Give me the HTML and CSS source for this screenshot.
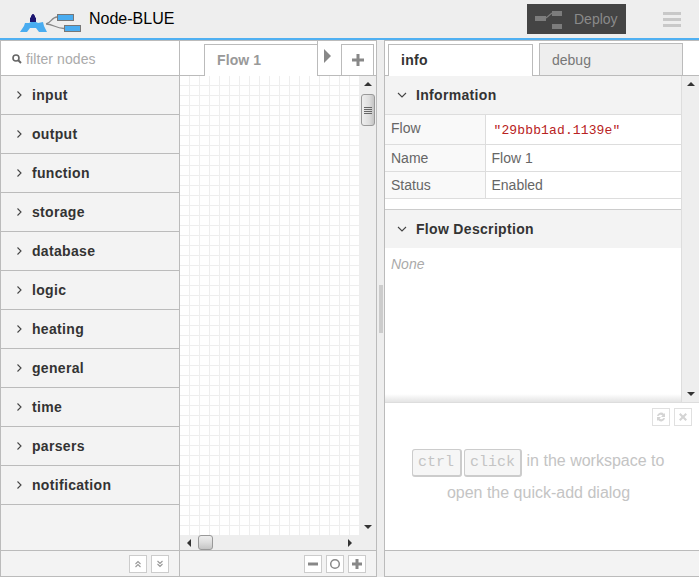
FILE: index.html
```html
<!DOCTYPE html>
<html lang="en">
<head>
    <meta charset="UTF-8">
    <meta name="viewport" content="width=device-width, initial-scale=1.0">
    <title>Node-BLUE</title>
    <link rel="stylesheet" href="styles.css">
</head>
<body>
    <header class="topbar">
        <svg class="logo" width="70" height="24" viewBox="0 0 70 24">
            <path d="M27 12C32 11 33 5 38 5M27 12C34 12 36 16 45 16.500" fill="none" stroke="#888" stroke-width="1.300"/>
            <path d="M1 20L5 14L6 11H10L12 10H17L19 11L24 10L25 14L28 20H20L17 16H11L8 20Z" fill="#49acf0"/>
            <path d="M11 10V6L12 5V4L13.500 2H14.500L16 4V5L17 6V10Z" fill="#1c1570"/>
            <rect x="38.500" y="2.500" width="16" height="6" fill="#49acf0" stroke="#777"/>
            <rect x="45.500" y="13.500" width="16" height="6" fill="#49acf0" stroke="#777"/>
        </svg>
        <span class="brand">Node-BLUE</span>
        <div class="deploy">
            <svg width="28" height="26" viewBox="0 0 28 26">
                <rect x="0" y="10" width="11" height="5" fill="#7c7c7c"/>
                <rect x="17" y="5" width="10" height="5" fill="#7c7c7c"/>
                <rect x="17" y="18" width="10" height="5" fill="#7c7c7c"/>
                <path d="M11 12l6-5" stroke="#7c7c7c" stroke-width="1.200"/>
            </svg>
            <span>Deploy</span>
        </div>
        <div class="menu"><i></i><i></i><i></i></div>
    </header>

    <main class="editor">
        <section class="palette">
            <div class="filter">
                <svg width="10" height="10" viewBox="0 0 10 10">
                    <circle cx="4" cy="4" r="3" fill="none" stroke="#666" stroke-width="1.600"/>
                    <path d="M6 6l3 3" stroke="#666" stroke-width="2"/>
                </svg>
                <span>filter nodes</span>
            </div>
            <div class="categories">
                <div class="category"><svg class="chev" width="6" height="10" viewBox="0 0 6 10"><path d="M1.500 1.500L5 5 1.500 8.500"/></svg>input</div>
                <div class="category"><svg class="chev" width="6" height="10" viewBox="0 0 6 10"><path d="M1.500 1.500L5 5 1.500 8.500"/></svg>output</div>
                <div class="category"><svg class="chev" width="6" height="10" viewBox="0 0 6 10"><path d="M1.500 1.500L5 5 1.500 8.500"/></svg>function</div>
                <div class="category"><svg class="chev" width="6" height="10" viewBox="0 0 6 10"><path d="M1.500 1.500L5 5 1.500 8.500"/></svg>storage</div>
                <div class="category"><svg class="chev" width="6" height="10" viewBox="0 0 6 10"><path d="M1.500 1.500L5 5 1.500 8.500"/></svg>database</div>
                <div class="category"><svg class="chev" width="6" height="10" viewBox="0 0 6 10"><path d="M1.500 1.500L5 5 1.500 8.500"/></svg>logic</div>
                <div class="category"><svg class="chev" width="6" height="10" viewBox="0 0 6 10"><path d="M1.500 1.500L5 5 1.500 8.500"/></svg>heating</div>
                <div class="category"><svg class="chev" width="6" height="10" viewBox="0 0 6 10"><path d="M1.500 1.500L5 5 1.500 8.500"/></svg>general</div>
                <div class="category"><svg class="chev" width="6" height="10" viewBox="0 0 6 10"><path d="M1.500 1.500L5 5 1.500 8.500"/></svg>time</div>
                <div class="category"><svg class="chev" width="6" height="10" viewBox="0 0 6 10"><path d="M1.500 1.500L5 5 1.500 8.500"/></svg>parsers</div>
                <div class="category"><svg class="chev" width="6" height="10" viewBox="0 0 6 10"><path d="M1.500 1.500L5 5 1.500 8.500"/></svg>notification</div>
            </div>
            <div class="footer footer-palette">
                <button class="tool-btn"><svg width="10" height="10" viewBox="0 0 10 10"><path d="M2.500 5L5 2.500 7.500 5M2.500 8L5 5.500 7.500 8" class="dbl"/></svg></button>
                <button class="tool-btn"><svg width="10" height="10" viewBox="0 0 10 10"><path d="M2.500 2L5 4.500 7.500 2M2.500 5L5 7.500 7.500 5" class="dbl"/></svg></button>
            </div>
        </section>

        <section class="workspace">
            <div class="tabs ws-tabs">
                <div class="ws-tab">Flow 1</div>
                <div class="ws-scroll-arrow"><svg width="8" height="14" viewBox="0 0 8 14"><path d="M0 0l7 7-7 7z" fill="#888"/></svg></div>
                <div class="ws-add"><svg width="12" height="12" viewBox="0 0 12 12"><path d="M4.500 0h3v4.500H12v3H7.500V12h-3V7.500H0v-3h4.500z" fill="#888"/></svg></div>
            </div>
            <div class="ws-body">
                <div class="grid"></div>
                <div class="vscroll">
                    <div class="arrow-up"></div>
                    <div class="thumb-v"><i></i><i></i><i></i><i></i></div>
                    <div class="vscroll-fill"></div>
                    <div class="arrow-down"></div>
                </div>
            </div>
            <div class="hscroll">
                <div class="arrow-left"></div>
                <div class="thumb-h"></div>
                <div class="hscroll-fill"></div>
                <div class="arrow-right"></div>
            </div>
            <div class="footer footer-ws">
                <button class="tool-btn"><svg width="12" height="12" viewBox="0 0 12 12"><path d="M1 4.500h10v3H1z" fill="#888"/></svg></button>
                <button class="tool-btn"><svg width="12" height="12" viewBox="0 0 12 12"><circle cx="6" cy="6" r="4.300" fill="none" stroke="#888" stroke-width="1.500"/></svg></button>
                <button class="tool-btn"><svg width="12" height="12" viewBox="0 0 12 12"><path d="M4.500 1h3v3.500H11v3H7.500V11h-3V7.500H1v-3h3.500z" fill="#888"/></svg></button>
            </div>
        </section>

        <div class="separator"><div class="grip"></div></div>

        <section class="sidebar">
            <div class="tabs side-tabs">
                <div class="side-tab active">info</div>
                <div class="side-tab">debug</div>
            </div>
            <div class="info-wrap">
                <div class="info">
                    <div class="section-head"><svg class="chev-down" width="10" height="6" viewBox="0 0 10 6"><path d="M1 1l4 4 4-4"/></svg>Information</div>
                    <table class="props">
                        <tr class="row-flow"><td class="key">Flow</td><td class="val"><span class="flow-id">"29bbb1ad.1139e"</span></td></tr>
                        <tr><td class="key">Name</td><td class="val">Flow 1</td></tr>
                        <tr><td class="key">Status</td><td class="val">Enabled</td></tr>
                    </table>
                    <div class="section-head desc-head"><svg class="chev-down" width="10" height="6" viewBox="0 0 10 6"><path d="M1 1l4 4 4-4"/></svg>Flow Description</div>
                    <div class="none">None</div>
                </div>
                <div class="vscroll info-scroll">
                    <div class="arrow-up"></div>
                    <div class="vscroll-fill"></div>
                    <div class="arrow-down"></div>
                </div>
            </div>
            <div class="tips">
                <div class="tip-btns">
                    <button class="tip-btn"><svg width="12" height="12" viewBox="0 0 12 12"><path d="M2 5a4 4 0 0 1 7-2l1-1v4H6l1.500-1.500A2.500 2.500 0 0 0 3.500 5zM10 7a4 4 0 0 1-7 2l-1 1V6h4L4.500 7.500A2.500 2.500 0 0 0 8.500 7z" fill="#d4d4d4"/></svg></button>
                    <button class="tip-btn"><svg width="10" height="10" viewBox="0 0 10 10"><path d="M1 2.500L2.500 1 5 3.500 7.500 1 9 2.500 6.500 5 9 7.500 7.500 9 5 6.500 2.500 9 1 7.500 3.500 5z" fill="#d4d4d4"/></svg></button>
                </div>
                <p class="tip-text"><kbd class="kbd-ctrl">ctrl</kbd> <kbd class="kbd-click">click</kbd> in the workspace to<br>open the quick-add dialog</p>
            </div>
            <div class="footer footer-side"></div>
        </section>
    </main>
</body>
</html>
```

FILE: styles.css
```css
* {
    box-sizing: border-box;
}

html, body {
    height: 100%;
}

body {
    font-family: 'Liberation Sans', Arial, sans-serif;
    font-size: 14px;
    margin: 0;
    padding: 0;
    overflow: hidden;
    background-color: #ffffff;
    color: #666666;
    display: flex;
    flex-direction: column;
}

.topbar {
    height: 40px;
    flex: none;
    display: flex;
    align-items: center;
    background-color: #eeeeee;
    border-bottom: 2px solid #4fb0f2;
}

.logo {
    margin: 10px 0 0 19px;
    flex: none;
}

.brand {
    font-size: 16px;
    color: #000000;
    margin-left: 0;
}

.deploy {
    margin-left: auto;
    width: 99px;
    height: 30px;
    background-color: #444444;
    display: flex;
    align-items: center;
    padding-left: 8px;
    color: #8a8a8a;
}

.deploy span {
    margin-left: 11px;
}

.menu {
    margin: 0 18px 0 37px;
    width: 18px;
    display: flex;
    flex-direction: column;
    gap: 3px;
}

.menu i {
    display: block;
    height: 3px;
    background-color: #c8c8c8;
}

.editor {
    flex: 1;
    display: flex;
    min-height: 0;
    background-color: #f1f1f1;
}

.palette {
    width: 180px;
    flex: none;
    display: flex;
    flex-direction: column;
    border: 1px solid #bbbbbb;
    border-bottom: 1px solid #bbbbbb;
    background-color: #f3f3f3;
}

.filter {
    height: 35px;
    flex: none;
    background-color: #ffffff;
    border-bottom: 1px solid #bbbbbb;
    display: flex;
    align-items: center;
    padding: 1px 0 0 11px;
    gap: 4px;
    color: #aaaaaa;
    letter-spacing: 0.1px;
}

.categories {
    flex: 1;
}

.category {
    height: 39px;
    display: flex;
    align-items: center;
    padding-left: 15px;
    font-weight: bold;
    color: #333333;
    letter-spacing: 0.32px;
    border-bottom: 1px solid #bbbbbb;
}

.chev {
    margin-right: 10px;
    flex: none;
}

.chev path, .chev-down path {
    fill: none;
    stroke: #444444;
    stroke-width: 1.100;
}

.footer {
    height: 26px;
    flex: none;
    background-color: #f3f3f3;
    border-top: 1px solid #bbbbbb;
    display: flex;
    align-items: center;
    justify-content: flex-end;
    gap: 4px;
}

.footer-palette {
    padding-right: 10px;
}

.tool-btn {
    width: 18px;
    height: 18px;
    padding: 0;
    border: 1px solid #cccccc;
    background-color: #ffffff;
    display: flex;
    align-items: center;
    justify-content: center;
}

.dbl {
    fill: none;
    stroke: #999999;
    stroke-width: 1.100;
}

.workspace {
    width: 197px;
    flex: none;
    display: flex;
    flex-direction: column;
    border-right: 1px solid #bbbbbb;
    border-bottom: 1px solid #bbbbbb;
    border-top: 1px solid #bbbbbb;
}

.tabs {
    height: 35px;
    flex: none;
    display: flex;
    align-items: flex-end;
    background-color: #ffffff;
    border-bottom: 1px solid #bbbbbb;
}

.ws-tabs {
    padding-left: 24px;
}

.ws-tab {
    width: 114px;
    height: 32px;
    background-color: #ffffff;
    border: 1px solid #bbbbbb;
    border-bottom: none;
    margin-bottom: -1px;
    padding: 7px 0 0 12px;
    font-weight: bold;
    color: #999999;
    letter-spacing: 0.1px;
}

.ws-scroll-arrow {
    width: 24px;
    height: 35px;
    margin-left: -1px;
    border-left: 1px solid #bbbbbb;
    padding: 9px 0 0 6px;
}

.ws-add {
    width: 33px;
    height: 31px;
    border: 1px solid #bbbbbb;
    border-bottom: none;
    display: flex;
    align-items: center;
    justify-content: center;
}

.ws-body {
    flex: 1;
    display: flex;
    min-height: 0;
}

.grid {
    flex: 1;
    background-color: #ffffff;
    background-image:
        linear-gradient(to right, #eeeeee 1px, transparent 1px),
        linear-gradient(to bottom, #eeeeee 1px, transparent 1px);
    background-size: 10px 10px;
    background-position: 9px 9px;
}

.vscroll {
    width: 16px;
    flex: none;
    display: flex;
    flex-direction: column;
    background-color: #eeeeee;
    align-items: center;
}

.vscroll-fill {
    flex: 1;
}

.arrow-up, .arrow-down {
    width: 0;
    height: 0;
    border-left: 4px solid transparent;
    border-right: 4px solid transparent;
    margin: 6px 0;
}

.arrow-up {
    border-bottom: 4px solid #333333;
}

.arrow-down {
    border-top: 4px solid #333333;
}

.thumb-v {
    width: 14px;
    height: 32px;
    margin-top: 2px;
    border: 1px solid #999999;
    border-radius: 3px;
    background: linear-gradient(to right, #eeeeee, #dddddd 60%, #c4c4c4);
    display: flex;
    flex-direction: column;
    justify-content: center;
    align-items: center;
    gap: 1px;
}

.thumb-v i {
    display: block;
    width: 8px;
    height: 1px;
    background-color: #666666;
}

.hscroll {
    height: 15px;
    flex: none;
    display: flex;
    align-items: center;
    background-color: #eeeeee;
    padding-right: 24px;
}

.hscroll-fill {
    flex: 1;
}

.arrow-left, .arrow-right {
    width: 0;
    height: 0;
    border-top: 4px solid transparent;
    border-bottom: 4px solid transparent;
}

.arrow-left {
    border-right: 4px solid #333333;
    margin-left: 7px;
}

.arrow-right {
    border-left: 4px solid #333333;
}

.thumb-h {
    width: 15px;
    height: 15px;
    margin-left: 7px;
    border: 1px solid #999999;
    border-radius: 3px;
    background: linear-gradient(to bottom, #eeeeee, #dddddd 50%, #c4c4c4);
}

.footer-ws {
    padding-right: 10px;
}

.separator {
    width: 7px;
    flex: none;
    display: flex;
    align-items: center;
    justify-content: center;
    background-color: #eeeeee;
}

.grip {
    width: 4px;
    height: 48px;
    background-color: #cccccc;
}

.sidebar {
    flex: 1;
    min-width: 0;
    display: flex;
    flex-direction: column;
    border-left: 1px solid #bbbbbb;
    border-bottom: 1px solid #bbbbbb;
    border-top: 1px solid #bbbbbb;
}

.side-tabs {
    padding-left: 3px;
    gap: 6px;
}

.side-tab {
    width: 144px;
    height: 32px;
    border: 1px solid #bbbbbb;
    border-bottom: none;
    background-color: #eeeeee;
    padding: 8px 0 0 12px;
    color: #777777;
}

.side-tab.active {
    width: 145px;
    background-color: #ffffff;
    padding-top: 7px;
    font-weight: bold;
    color: #333333;
    letter-spacing: 0.3px;
    margin-bottom: -1px;
}

.info-wrap {
    flex: 1;
    display: flex;
    min-height: 0;
    background-color: #ffffff;
}

.info {
    flex: 1;
    min-width: 0;
    border-right: 1px solid #dddddd;
    background: linear-gradient(to top, #e4e4e4, #ffffff 8px);
}

.section-head {
    height: 38px;
    display: flex;
    align-items: center;
    padding-left: 12px;
    background-color: #f3f3f3;
    font-weight: bold;
    color: #333333;
    letter-spacing: 0.32px;
}

.chev-down {
    margin-right: 9px;
}

.props {
    width: 100%;
    border-collapse: collapse;
    background-color: #ffffff;
}

.props td {
    height: 27px;
    padding: 0 6px;
    border-top: 1px solid #dddddd;
    border-bottom: 1px solid #dddddd;
}

.props .row-flow td {
    height: 30px;
}

.props .row-flow .key {
    vertical-align: top;
    padding-top: 5px;
}

.key {
    width: 100px;
    background-color: #f9f9f9;
    border-right: 1px solid #dddddd;
    color: #666666;
}

.flow-id {
    font-family: 'Liberation Mono', monospace;
    font-size: 13px;
    color: #b82222;
    letter-spacing: 0.13px;
    margin-left: 2px;
}

.desc-head {
    height: 39px;
    margin-top: 10px;
    border-top: 1px solid #cccccc;
}

.none {
    padding: 8px 6px;
    font-style: italic;
    color: #aaaaaa;
}

.info-scroll {
    width: 17px;
}

.tips {
    height: 148px;
    flex: none;
    background-color: #ffffff;
    border-top: 1px solid #dddddd;
    padding: 5px 7px 0 0;
}

.tip-btns {
    display: flex;
    justify-content: flex-end;
    gap: 4px;
}

.tip-btn {
    width: 18px;
    height: 18px;
    padding: 0;
    border: 1px solid #e0e0e0;
    background-color: #ffffff;
    display: flex;
    align-items: center;
    justify-content: center;
}

.tip-text {
    margin: 20px 0 0;
    text-align: center;
    font-size: 16px;
    line-height: 30px;
    color: #c4c4c4;
}

kbd {
    font-family: 'Liberation Mono', monospace;
    font-size: 15px;
    padding: 4px 5.5px;
    background-color: #f6f6f6;
    border: 1px solid #cccccc;
    border-bottom-width: 2px;
    border-right-width: 2px;
    border-radius: 3px;
    color: #c4c4c4;
}

.kbd-ctrl {
    margin-left: -1px;
}

.kbd-click {
    margin-left: -2px;
    padding: 4px 5px;
}

.footer-side {
    border-top: 1px solid #bbbbbb;
}
```
